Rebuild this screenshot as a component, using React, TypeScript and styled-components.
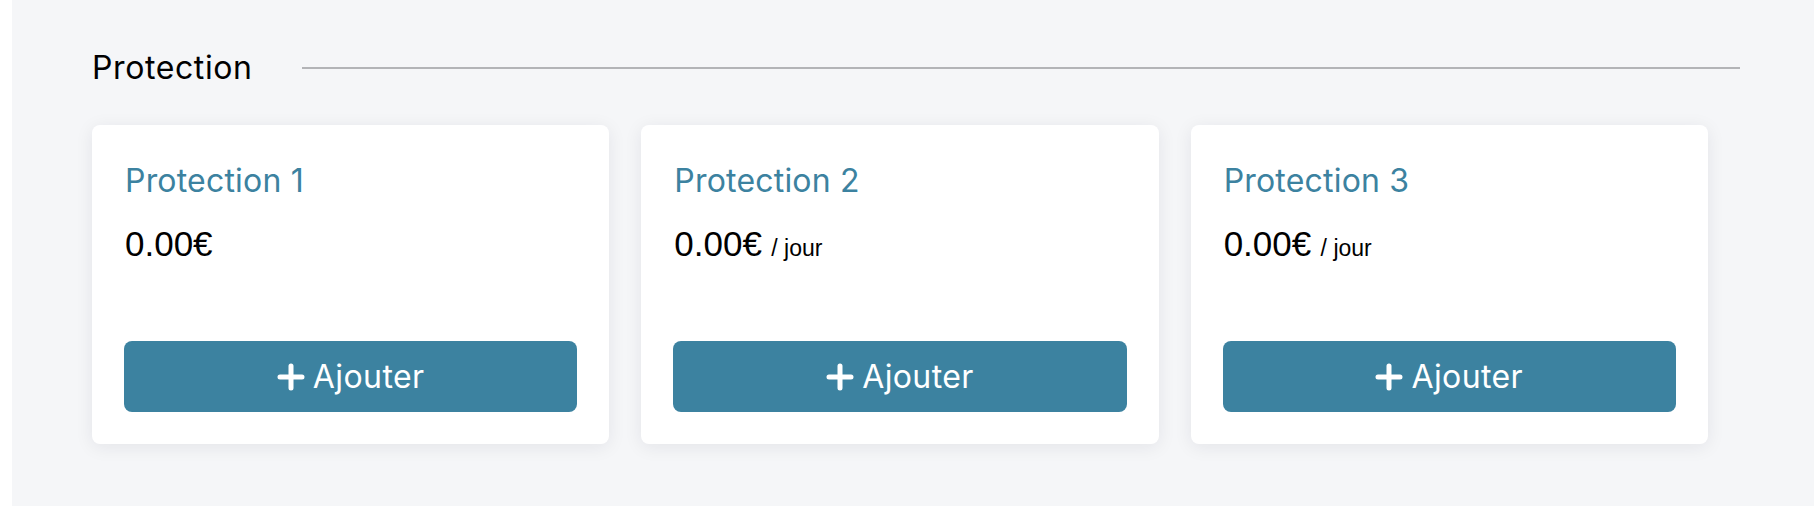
import React from "react";
import styled, { createGlobalStyle } from "styled-components";

const GlobalStyle = createGlobalStyle`
  html, body { margin: 0; padding: 0; background: #ffffff; }
  body { font-family: Inter, "Noto Sans", sans-serif; }
  * { box-sizing: border-box; }
`;

const Page = styled.div`
  margin-left: 12px;
  min-height: 100vh;
  background: #f5f6f8;
  padding: 44px 74px 0 80px;
`;

const SectionHeader = styled.div`
  display: flex;
  align-items: center;
  gap: 49px;
  height: 48px;
`;

const SectionTitle = styled.h2`
  margin: 0;
  font-family: Inter, "Noto Sans", sans-serif;
  font-weight: 400;
  font-size: 32px;
  line-height: 48px;
  color: #000000;
  letter-spacing: 0.6px;
`;

const Rule = styled.div`
  flex: 1;
  height: 2px;
  background: #b3b4b7;
`;

const CardRow = styled.div`
  display: flex;
  align-items: flex-start;
  margin-top: 33px;
`;

const Card = styled.div`
  flex: 0 0 calc(33.333% - 32px);
  margin-right: 32px;
  background: #ffffff;
  border-radius: 8px;
  box-shadow: 0 3px 18px rgba(20, 30, 50, 0.08);
  padding: 32px 32px 32px 33px;
  display: flex;
  flex-direction: column;
`;

const CardTitle = styled.h3`
  margin: 0;
  font-family: Inter, "Noto Sans", sans-serif;
  font-weight: 400;
  font-size: 32px;
  line-height: 48px;
  color: #3c82a0;
  letter-spacing: 0.2px;
`;

const Price = styled.div`
  margin-top: 19px;
  height: 40px;
  font-family: "Liberation Sans", Arial, sans-serif;
  font-size: 35px;
  line-height: 40px;
  color: #000000;
`;

const PriceUnit = styled.span`
  font-size: 23px;
  line-height: 1;
  margin-left: 3px;
`;

const AddButton = styled.button`
  margin-top: 77px;
  margin-left: -1px;
  height: 71px;
  width: calc(100% + 1px);
  border: none;
  border-radius: 8px;
  background: #3c82a0;
  color: #ffffff;
  display: flex;
  align-items: center;
  justify-content: center;
  gap: 8px;
  font-family: Inter, "Noto Sans", sans-serif;
  font-size: 32px;
  font-weight: 400;
  letter-spacing: 0.4px;
  cursor: pointer;
  padding: 0;
`;

const PlusIcon = () => (
  <svg width="28" height="28" viewBox="0 0 28 28" aria-hidden="true">
    <path
      d="M14 3v22M3 14h22"
      stroke="#ffffff"
      strokeWidth="5"
      strokeLinecap="round"
      fill="none"
    />
  </svg>
);

const protections = [
  { name: "Protection 1", price: "0.00€", unit: "" },
  { name: "Protection 2", price: "0.00€", unit: "/ jour" },
  { name: "Protection 3", price: "0.00€", unit: "/ jour" },
];

export default function App() {
  return (
    <>
      <GlobalStyle />
      <Page>
        <SectionHeader>
          <SectionTitle>Protection</SectionTitle>
          <Rule />
        </SectionHeader>
        <CardRow>
          {protections.map((p) => (
            <Card key={p.name}>
              <CardTitle>{p.name}</CardTitle>
              <Price>
                {p.price}
                {p.unit && <PriceUnit> {p.unit}</PriceUnit>}
              </Price>
              <AddButton type="button">
                <PlusIcon />
                Ajouter
              </AddButton>
            </Card>
          ))}
        </CardRow>
      </Page>
    </>
  );
}
